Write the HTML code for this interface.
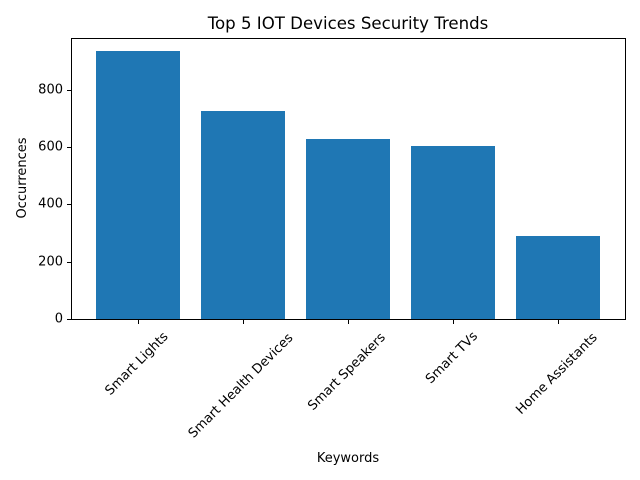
<!DOCTYPE html>
<html><head><meta charset="utf-8"><style>
html,body{margin:0;padding:0;background:#fff;}
svg{display:block;font-family:"DejaVu Sans","Liberation Sans",sans-serif;}
</style></head><body>
<svg width="640" height="480" viewBox="0 0 640 480">
<rect width="640" height="480" fill="#fff"/>
<g fill="#1f77b4">
<rect x="96" y="51" width="84" height="268"/>
<rect x="201" y="111" width="84" height="208"/>
<rect x="306" y="139" width="84" height="180"/>
<rect x="411" y="146" width="84" height="173"/>
<rect x="516" y="236" width="84" height="83"/>
</g>
<rect x="71.5" y="38.5" width="554" height="281" fill="none" stroke="#000" stroke-width="1"/>
<g stroke="#000" stroke-width="1">
<line x1="67" y1="319.5" x2="71" y2="319.5"/>
<line x1="67" y1="262.5" x2="71" y2="262.5"/>
<line x1="67" y1="204.5" x2="71" y2="204.5"/>
<line x1="67" y1="147.5" x2="71" y2="147.5"/>
<line x1="67" y1="90.5" x2="71" y2="90.5"/>
<line x1="138.5" y1="320" x2="138.5" y2="324"/>
<line x1="243.5" y1="320" x2="243.5" y2="324"/>
<line x1="348.5" y1="320" x2="348.5" y2="324"/>
<line x1="453.5" y1="320" x2="453.5" y2="324"/>
<line x1="558.5" y1="320" x2="558.5" y2="324"/>
</g>
<g font-size="13" fill="#000" text-anchor="end" dominant-baseline="central">
<text x="63" y="319">0</text>
<text x="63" y="262">200</text>
<text x="63" y="204">400</text>
<text x="63" y="147">600</text>
<text x="63" y="90">800</text>
</g>
<g font-size="13" fill="#000" text-anchor="middle" dominant-baseline="central">
<text transform="translate(137,364) rotate(-45)">Smart Lights</text>
<text transform="translate(241,386) rotate(-45)">Smart Health Devices</text>
<text transform="translate(347,372) rotate(-45)">Smart Speakers</text>
<text transform="translate(452,358) rotate(-45)">Smart TVs</text>
<text transform="translate(557,374) rotate(-45)">Home Assistants</text>
</g>
<text x="348" y="29" font-size="16.6" text-anchor="middle">Top 5 IOT Devices Security Trends</text>
<text x="348" y="462" font-size="13" text-anchor="middle">Keywords</text>
<text transform="translate(26,178) rotate(-90)" font-size="13" text-anchor="middle">Occurrences</text>
</svg>
</body></html>
